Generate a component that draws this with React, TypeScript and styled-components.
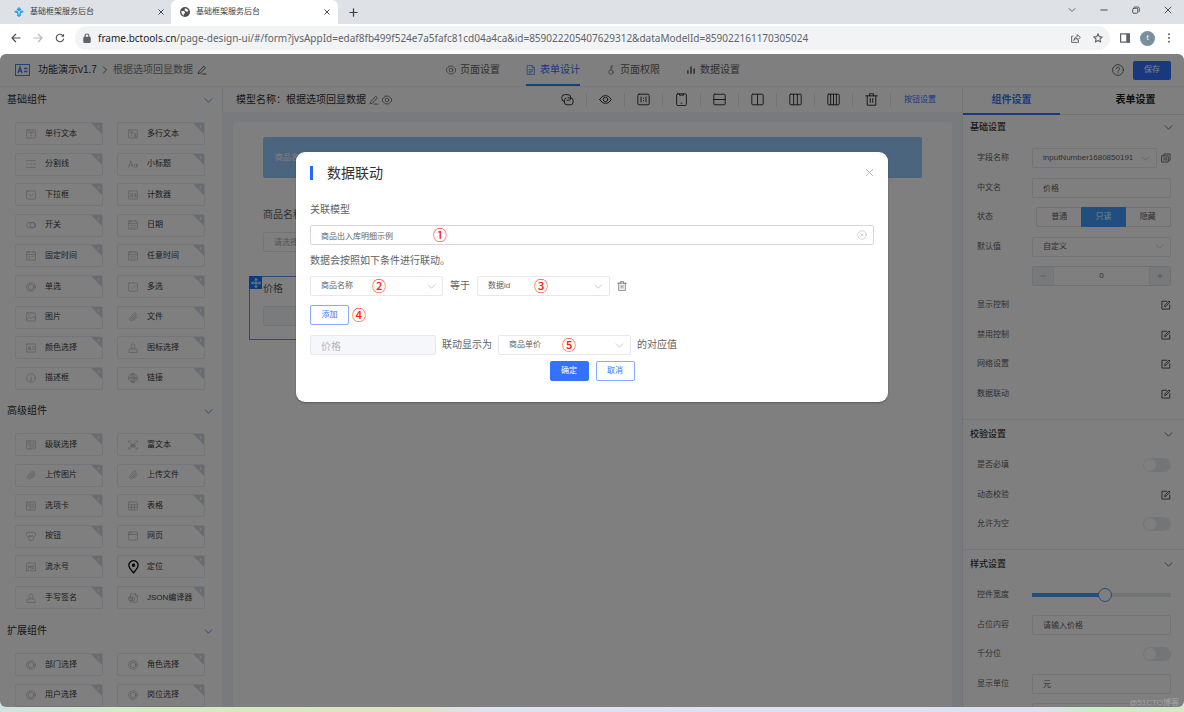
import React from 'react';
import styled, { createGlobalStyle, css } from 'styled-components';

const sans = `"Liberation Sans", "Noto Sans CJK SC", sans-serif`;
const chromeSans = `"Noto Sans", "Noto Sans CJK SC", sans-serif`;

const GlobalStyle = createGlobalStyle`
  *, *::before, *::after { box-sizing: border-box; }
  html, body { margin: 0; padding: 0; }
  body { font-family: ${sans}; font-size: 8px; line-height: 12px; color: #606266; overflow: hidden; }
  button, input, select { font: inherit; color: inherit; margin: 0; padding: 0; min-width: 0; }
  button { border: 0; background: none; display: inline-flex; align-items: center; justify-content: center; }
  a { color: inherit; text-decoration: none; }
  h1, h2, h3, p, ul { margin: 0; padding: 0; font-weight: 400; list-style: none; }
  svg { display: block; flex: none; }
`;

/* ---------- icons ---------- */

type IconProps = { size?: number; h?: number; w?: number; children: React.ReactNode };
const Svg = ({ size = 10, h, w = 1, children }: IconProps) => (
  <svg width={size} height={h ?? size} viewBox={`0 0 16 ${h ? Math.round((16 * h) / size) : 16}`} fill="none" stroke="currentColor"
    strokeWidth={w} strokeLinecap="round" strokeLinejoin="round" aria-hidden="true">
    {children}
  </svg>
);

const box = <rect x="1" y="1.5" width="14" height="13" rx="1" />;
const shapes: Record<string, React.ReactNode> = {
  text: <>{box}<path d="M5 5h6M8 5v6.5M5 5v1M11 5v1" /></>,
  textarea: <>{box}<path d="M3.5 5h5M6 5v6.5M10 8h3M11.5 8v3.5M10 11.5h3" /></>,
  divider: <path d="M1 2.500h14M1 13.500h14M1 8h2.500M6.700 8h2.600M12.500 8H15" />,
  title: <path d="M1 13L4.5 3 8 13M2.2 9.8h4.6M14.5 8v5M14.5 10.5a2.3 2.5 0 1 1-4.6 0a2.3 2.5 0 1 1 4.6 0" />,
  select: <>{box}<path d="M4.5 6.5L8 10l3.5-3.5" /></>,
  number: <>{box}<path d="M3.5 6v5M5.8 6h2v2.5h-2V11h2M10 6h2.5v5H10M10.5 8.5h2" /></>,
  toggle: <><rect x="1" y="4" width="14" height="8.5" rx="4.2" /><circle cx="10.7" cy="8.2" r="4.2" /></>,
  date: <>{box}<path d="M1 5.5h14M4.5 0.5v2M11.5 0.5v2M4.5 8.5h1M7.5 8.5h1M10.5 8.5h1M4.5 11.5h1M7.5 11.5h1M10.5 11.5h1" /></>,
  time: <>{box}<path d="M1 5.5h14M4.5 0.5v2M11.5 0.5v2M4.5 8.5h2M8.5 8.5h3M4.5 11.5h2" /></>,
  radio: <><circle cx="8" cy="8" r="7" /><circle cx="8" cy="8" r="4.4" /></>,
  check: <>{box}<path d="M4.5 8l2.6 2.6L12 6" /></>,
  image: <>{box}<path d="M1.5 12l3.5-3.5 2 2 4.5-3 3.5 3M4 5h2" /></>,
  clip: <path d="M13.5 6.5l-6.2 6.7a3 3 0 0 1-4.4-4.1L9.5 2a2.1 2.1 0 0 1 3.1 2.9L6.5 11.4a1 1 0 0 1-1.5-1.4l5.2-5.6M14.5 8l-5 5.5" />,
  color: <>{box}<path d="M3.5 11L5.7 5l2.2 6M4.3 9h2.8M10 6.5h3M10 10h3" /></>,
  stamp: <><path d="M5.8 9.5c0-1.5.4-2-.6-3.3a3.2 3.2 0 1 1 5.6 0c-1 1.3-.6 1.8-.6 3.3" /><path d="M1.5 14.5v-3.2q0-1.8 1.8-1.8h9.4q1.8 0 1.8 1.8v3.2z" /></>,
  info: <><circle cx="8" cy="8" r="7" /><path d="M8 7v4.5M8 4.4v.2M7 11.5h2" /></>,
  globe: <><circle cx="8" cy="8" r="7" /><ellipse cx="8" cy="8" rx="3.2" ry="7" /><path d="M1 8h14M8 1v14" /></>,
  columns: <>{box}<path d="M6.500 2v12M3 5h1.500M3 8h1.500M9 5h3.500M9 8h3.500M9 11h3.500" /></>,
  rich: <path d="M1 4V1.500h3M12 1.500h3V4M15 12v2.500h-3M4 14.500H1V12M4 5.500L6 4.500M12 5.500L10 4.500M4.500 11.500V8.500h7v3M6 6.500h4v5H6zM8 6.500v5" />,
  table: <>{box}<path d="M1 6h14M1 10h14M5.700 6v8M10.300 6v8" /></>,
  button: <><path d="M4 9H2.500Q1 9 1 7.500v-4Q1 2 2.500 2h11Q15 2 15 3.500v4Q15 9 13.500 9" /><path d="M4.500 11l2-4.500 1.500 3 2-2.500 2 3v3.500l-1.500 1.500h-4z" /></>,
  web: <>{box}<path d="M1 5.500h14M3.500 3.500h.5M6 3.500h.5" /></>,
  serial: <><path d="M1 14.500V1.500h14v13l-2.300-1.500-2.300 1.500L8 13l-2.300 1.500L3.300 13z" /><path d="M4 10V6l3 4V6M9.500 6h2.500v2.500h-2.500zM9.500 10.500H12" /></>,
  json: <><path d="M4 6V1.500h8l3 3v10H4v-2M12 1.500v3h3" /><rect x="1" y="6.500" width="9.500" height="5.500" rx="1" /><path d="M3.500 8v2.500M6 8v2.500h1.500V8z" /></>,
  pin: <><path d="M8 18.500C4 14 1.200 11 1.200 7.500a6.800 6.800 0 0 1 13.600 0C14.800 11 12 14 8 18.500z" /><circle cx="8" cy="7.500" r="1.600" fill="currentColor" /></>,
  gear: <><path d="M5.200 1.800h5.600L12.500 4l2.700 1.700v4.600L12.500 12l-1.700 2.200H5.200L3.500 12 .8 10.300V5.700L3.500 4z" /><circle cx="8" cy="8" r="3" /></>,
  doc: <><path d="M2.500 1h7.500l3.500 3.500V15h-11zM10 1v3.500h3.500M5 7.500h6M5 10h6M5 12.500h3" /></>,
  key: <><circle cx="8" cy="11.300" r="3.500" /><path d="M8 7.800V1.500h3M8 4.500h2" /></>,
  bars: <path d="M3 14V8.500M8 14V2.500M13 14V5.500" strokeWidth="2.500" strokeLinecap="butt" />,
  pen: <path d="M3 10.500L10.800 1.800l2.700 2.400-7.800 8.700-3.400.8zM8 14.500h6.500" />,
  chevron: <path d="M2 5l6 6 6-6" />,
  right: <path d="M5 2l6 6-6 6" />,
  close: <path d="M2 2l12 12M14 2L2 14" />,
  plus: <path d="M8 1.500v13M1.500 8h13" />,
  minus: <path d="M1.500 8h13" />,
  help: <><circle cx="8" cy="8" r="7.200" /><path d="M5.800 6.300a2.200 2.200 0 1 1 3.300 1.900Q8 8.800 8 9.800M8 11.700v.2" /></>,
  link: <><path d="M4.500 10.500A3.500 3.500 0 0 1 1 7V5.500A3.500 3.500 0 0 1 4.500 2h4A3.500 3.500 0 0 1 12 5.500V6a3 3 0 0 1-3 3H7.500" /><path d="M8.500 6h3A3.500 3.500 0 0 1 15 9.500V11a3.500 3.500 0 0 1-3.500 3.500h-4A3.500 3.500 0 0 1 4 11V9.500A3.500 3.500 0 0 1 6 6.300" /></>,
  eye: <><path d="M.8 8Q3.500 3 8 3t7.200 5Q12.500 13 8 13T.8 8z" /><circle cx="8" cy="8" r="2.800" /></>,
  ratio: <><rect x="1" y="1.500" width="14" height="13" rx="1.500" /><path d="M5 5v6M11 5v6M8 6.300v.3M8 9.400v.3" /></>,
  phone: <><rect x="2" y="1" width="12" height="14.500" rx="1.500" /><path d="M5.500 1.200v1.500h5V1.200M7.500 12.500h1" /></>,
  rows: <><rect x="1" y="1.500" width="14" height="13" rx="1" /><path d="M1 8h14" /></>,
  col2: <><rect x="1" y="1.500" width="14" height="13" rx="1" /><path d="M8 1.500v13" /></>,
  col3: <><rect x="1" y="1.500" width="14" height="13" rx="1" /><path d="M5.700 1.500v13M10.300 1.500v13" /></>,
  col4: <><rect x="1" y="1.500" width="14" height="13" rx="1" /><path d="M4.500 1.500v13M8 1.500v13M11.500 1.500v13" /></>,
  trash: <path d="M1 3.500h14M5.500 3.500V1h5v2.500M2.700 3.500V15h10.600V3.500M6.500 6.800v4.700M9.500 6.800v4.700" />,
  copy: <><path d="M4.500 4V1.500h10v10H12" /><path d="M1.500 4.500h10v10h-10zM4 8h5M4 11h5" /></>,
  edit: <><path d="M9 2H1.500v12.500H14V8" /><path d="M6 10l.5-2.300L12.700 1.500l1.800 1.800-6.200 6.200z" /></>,
  clear: <><circle cx="8" cy="8" r="6.800" /><path d="M6 6l4 4M10 6l-4 4" /></>,
  back: <path d="M14.500 8H1.800M7.500 2L1.500 8l6 6" />,
  forward: <path d="M1.500 8h12.700M8.500 2l6 6-6 6" />,
  reload: <><path d="M13.800 9.500A6 6 0 1 1 12.500 4" /><path d="M14.500 1v5h-5z" fill="currentColor" stroke="none" /></>,
  lock: <><rect x="3" y="7" width="10" height="8" rx="1" fill="currentColor" /><path d="M5 7V4.500a3 3 0 0 1 6 0V7" /></>,
  share: <><path d="M3 5H1v10h11v-3" /><path d="M4.500 11.500Q5 6 10 5.700V2.500l5 4.500-5 4.500V8.500Q6.500 8.500 4.500 11.500z" /></>,
  star: <path d="M8 1.300l2 4.500 4.900.5-3.700 3.300 1.100 4.900L8 12l-4.300 2.500 1.100-4.900L1.100 6.300 6 5.800z" />,
  side: <><rect x="1" y="1.500" width="14" height="13" /><path d="M11 2h4v12h-4z" fill="currentColor" /></>,
  dots: <path d="M8 2v.1M8 8v.1M8 14v.1" strokeWidth="3.200" />,
  restore: <><rect x="1.500" y="4.500" width="10" height="10" rx="2" /><path d="M5 2h6.500q3 0 3 3v6" /></>,
  move: <path d="M8 1v14M1 8h14M6 3l2-2 2 2M6 13l2 2 2-2M3 6L1 8l2 2M13 6l2 2-2 2" />,
};

const Icon = ({ name, size, h, w }: { name: string; size?: number; h?: number; w?: number }) => (
  <Svg size={size} h={h} w={w}>{shapes[name]}</Svg>
);

/* ---------- browser frame ---------- */

const Browser = styled.div`
  display: flex; flex-direction: column; height: 100vh;
  background: linear-gradient(90deg, #cfe3e0 0, #d0ecc8 10%, #d3e9c4 20%, #e2e0c8 36%, #dbe2f2 41%, #dbe1f2 88%, #cdebc8 92%, #d0e9cb 100%);
  padding-bottom: 5px;
`;
const TabStrip = styled.div`
  display: flex; align-items: stretch; height: 24px; flex: none; background: #dee1e6; font-family: ${sans}; color: #3c4043;
`;
const BrowserTab = styled.div<{ $active?: boolean }>`
  display: flex; align-items: center; gap: 6px; width: 167px; padding: 0 8px 0 9px;
  border-radius: 6px 6px 0 0; background: ${p => (p.$active ? '#fff' : 'transparent')};
  &:first-child { width: 171px; padding: 0 7px 0 14px; }
  button { margin-left: auto; }
`;
const StripButton = styled.button` width: 30px; `;
const WindowControls = styled.div`
  margin-left: auto; display: flex; align-items: center; padding-bottom: 4px;
  button { width: 32px; }
`;
const AddressRow = styled.div`
  display: flex; align-items: center; height: 30px; flex: none; padding: 0 10px 2px 9px; background: #fff; color: #5f6368;
`;
const NavButton = styled.button<{ $muted?: boolean }>`
  width: 22px; height: 20px; color: ${p => (p.$muted ? '#b5b8bc' : '#4a4d51')};
  &:first-child { width: 13px; margin-right: 5px; }
`;
const Omnibox = styled.div`
  flex: 1; display: flex; align-items: center; gap: 6px; height: 24px; margin: 0 10px 0 4px; padding: 0 7px;
  border-radius: 12px; background: #f1f3f4; font-family: ${chromeSans};
  button { margin-left: 6px; }
`;
const Url = styled.p`
  flex: 1; line-height: 16px; white-space: nowrap; overflow: hidden; font-size: 10px;
  b { font-weight: 400; color: #202124; }
`;
const Avatar = styled.button`
  width: 15px; height: 15px; margin: 0 9px 0 10px; border-radius: 50%; background: #78909c; color: #fff;
`;
const Viewport = styled.div`
  position: relative; flex: 1; min-height: 0; display: flex; flex-direction: column; overflow: hidden;
  background: #fff; border-radius: 6px;
`;
const Frame = styled.div` flex: 1; min-height: 0; display: flex; background: linear-gradient(#fff 20px, transparent 20px); `;

/* ---------- app header ---------- */

const Header = styled.header`
  display: grid; grid-template-columns: 1fr auto 1fr; flex: none; height: 33px;
  padding: 0 13px 0 15px; border-bottom: 1px solid #eef0f4; font-size: 10px;
`;
const Crumbs = styled.div`
  display: flex; align-items: center; gap: 4px; color: #303133;
  span { color: #7a7c80; }
`;
const Logo = styled.span` margin-right: 4px; `;
const TopNav = styled.nav` display: flex; gap: 26px; `;
const TopLink = styled.a<{ $active?: boolean }>`
  display: flex; align-items: center; gap: 4px; height: 32px; padding-top: 2px;
  color: ${p => (p.$active ? '#3471ff' : '#606266')}; border-bottom: 2px solid ${p => (p.$active ? '#1e88f5' : 'transparent')};
`;
const HeaderActions = styled.div` display: flex; align-items: center; justify-content: flex-end; gap: 9px; color: #606266; `;
const SaveButton = styled.button` width: 38px; height: 19px; border-radius: 2px; background: #3471ff; color: #fff; font-size: 8px; `;
const SmallButton = styled.button<{ $primary?: boolean }>`
  width: 39px; height: 20px; border-radius: 2px; border: 1px solid ${p => (p.$primary ? '#3471ff' : '#85aaff')};
  background: ${p => (p.$primary ? '#3471ff' : '#fff')}; color: ${p => (p.$primary ? '#fff' : '#3471ff')};
`;

const Body = styled.div` flex: 1; min-height: 0; display: flex; `;

/* ---------- component palette ---------- */

const Palette = styled.aside` width: 222px; flex: none; overflow: hidden; `;
const PaletteHeading = styled.h2`
  display: flex; align-items: center; justify-content: space-between; height: 26px; padding: 0 9px 0 7px;
  font-size: 10px; color: #303133;
  svg { color: #3471ff; }
`;
const PaletteGrid = styled.ul`
  display: grid; grid-template-columns: 1fr 1fr; grid-auto-rows: 31px 30px 31px 30px 31px; align-items: center;
  column-gap: 14px; padding: 5px 17px 5px 15px;
`;
const PaletteItem = styled.button<{ $dark?: boolean }>`
  position: relative; width: 100%; height: 23px; justify-content: flex-start; gap: 9px; padding-left: 10px;
  border: 1px solid #e9ebf0; border-radius: 2px; color: #3a3c40; white-space: nowrap;
  svg:first-child { color: ${p => (p.$dark ? '#000' : '#acaeb3')}; }
`;
const PinIcon = styled.span`
  width: 10px; display: flex; justify-content: center; color: #000;
`;
const Corner = styled.svg` position: absolute; top: 0; right: 0; `;

const palette: { title: string; items: [string, string][] }[] = [
  { title: '基础组件', items: [
    ['text', '单行文本'], ['textarea', '多行文本'], ['divider', '分割线'], ['title', '小标题'], ['select', '下拉框'], ['number', '计数器'],
    ['toggle', '开关'], ['date', '日期'], ['time', '固定时间'], ['date', '任意时间'], ['radio', '单选'], ['check', '多选'],
    ['image', '图片'], ['clip', '文件'], ['color', '颜色选择'], ['stamp', '图标选择'], ['info', '描述框'], ['globe', '链接'],
  ] },
  { title: '高级组件', items: [
    ['columns', '级联选择'], ['rich', '富文本'], ['clip', '上传图片'], ['clip', '上传文件'], ['columns', '选项卡'], ['table', '表格'],
    ['button', '按钮'], ['web', '网页'], ['serial', '流水号'], ['pin', '定位'], ['stamp', '手写签名'], ['json', 'JSON编译器'],
  ] },
  { title: '扩展组件', items: [['radio', '部门选择'], ['radio', '角色选择'], ['radio', '用户选择'], ['radio', '岗位选择']] },
];

/* ---------- designer ---------- */

const Designer = styled.main` flex: 1; min-width: 0; display: flex; flex-direction: column; background: #f0f4fa; `;
const ToolBar = styled.div`
  display: flex; align-items: center; justify-content: space-between; height: 25px; flex: none;
  padding: 0 26px 0 13px; border-left: 1px solid #e6e9ef; background: #fff; color: #303133;
`;
const ModelName = styled.div`
  display: flex; align-items: center; gap: 3px; font-size: 10px;
  svg { color: #606266; }
`;
const Tools = styled.div`
  display: flex; align-items: center;
  button { width: 38px; height: 14px; border-right: 1px solid #e4e7ed; }
  a { margin-left: 13px; color: #3471ff; }
`;
const Canvas = styled.div`
  flex: 1; margin: 10px 10px 0 11px; padding: 15px 30px 0; border-radius: 3px 3px 0 0; background: #fff;
`;
const Banner = styled.div`
  display: flex; align-items: center; height: 41px; padding-left: 12px; border-radius: 2px; background: #99cafd; color: #fff;
`;
const CanvasField = styled.div<{ $selected?: boolean }>`
  position: relative; display: flex; flex-direction: column; gap: 10px; width: 50%; font-size: 10px;
  margin: ${p => (p.$selected ? '24px 0 0 -14px' : '30px 0 0')};
  padding: ${p => (p.$selected ? '5px 14px 13px 13px' : '0')};
  border: ${p => (p.$selected ? '1px solid #5b93f5' : '0')};
  label { line-height: 14px; }
`;
const MoveHandle = styled.button`
  position: absolute; top: -1px; left: -1px; width: 13px; height: 13px; background: #1677ff; color: #fff;
`;

/* ---------- fields ---------- */

const boxed = css<{ $dark?: boolean }>`
  width: 100%; height: 20px; padding: 0 10px; border-radius: 2px; background: #fff; outline: 0; font-size: 8px;
  border: 1px solid ${p => (p.$dark ? '#d4d7de' : '#e6e8ed')};
`;
const TextField = styled.input<{ $dark?: boolean }>`
  ${boxed}
  &::placeholder { color: #a8abb2; opacity: 1; }
  &:disabled { background: #f5f7fa; color: #b4b8c0; font-size: 10px; }
`;
const NativeSelect = styled.select` ${boxed} appearance: none; `;
const FieldBox = styled.div<{ $w?: number }>`
  display: grid; grid-template-columns: minmax(0, 1fr); align-items: center; position: relative;
  ${p => (p.$w ? `width: ${p.$w}px; flex: none;` : 'flex: 1; min-width: 0;')}
  > * { grid-area: 1 / 1; }
  > svg { justify-self: end; margin-right: 7px; color: #b4b8c0; pointer-events: none; }
`;
const Select = ({ id, value, w, label, children }: { id?: string; value: string; w?: number; label?: string; children?: React.ReactNode }) => (
  <FieldBox $w={w}>
    <NativeSelect id={id} aria-label={label} defaultValue={value}><option>{value}</option></NativeSelect>
    <Icon name="chevron" size={9} w={1.300} />
    {children}
  </FieldBox>
);

/* ---------- settings panel ---------- */

const Settings = styled.aside` width: 222px; flex: none; overflow: hidden; border-left: 1px solid #e6e9ef; `;
const SettingTabs = styled.div`
  display: flex; justify-content: space-between; height: 28px; border-bottom: 1px solid #e0e4eb;
`;
const SettingTab = styled.button<{ $active?: boolean }>`
  width: 97px; height: 28px; font-size: 10px; font-weight: 700; color: ${p => (p.$active ? '#3471ff' : '#202124')};
  border-bottom: 2px solid ${p => (p.$active ? '#3471ff' : 'transparent')};
`;
const Section = styled.section`
  padding: 0 13px 11px 7px;
  & + & { padding-top: 2px; border-top: 1px solid #eceef2; }
  &:last-child { padding-bottom: 0; }
`;
const SectionTitle = styled.h3`
  display: flex; align-items: center; justify-content: space-between; height: 24px; margin-right: -2px;
  font-size: 9px; font-weight: 500; color: #303133;
`;
const Rows = styled.div`
  display: grid; grid-template-columns: minmax(0, 1fr); grid-auto-rows: 29px 30px 29px 30px 29px; padding: 4px 0 0 7px;
`;
const Row = styled.div`
  display: flex; align-items: center; gap: 4px; padding-top: 1px;
  > label, > span:first-child { width: 51px; flex: none; color: #606266; }
`;
const EditButton = styled.button` margin-left: auto; width: 10px; height: 20px; color: #4a4c50; `;
const CopyButton = styled.button` width: 10px; height: 20px; `;
const RadioGroup = styled.div`
  flex: 1; display: flex; height: 20px; margin-left: 4px; border: 1px solid #e0e3e9; border-radius: 2px;
  label { flex: 1; display: flex; align-items: center; justify-content: center; }
  input { appearance: none; width: 0; height: 0; }
  label:has(input:checked) { background: #409eff; color: #fff; margin: -1px 0; }
`;
const Stepper = styled.div`
  flex: 1; display: flex; height: 20px; border: 1px solid #e0e3e9; border-radius: 2px; overflow: hidden; margin-left: 55px;
  button { width: 20px; flex: none; background: #f1f3f7; color: #8a8d93; }
  input { flex: 1; border: 0; text-align: center; outline: 0; border-left: 1px solid #e6e8ed; border-right: 1px solid #e6e8ed; }
`;
const Toggle = styled.input`
  &&& { appearance: none; width: 28px; height: 14px; margin-left: auto; padding: 1px; }
  border-radius: 7px; background: #e9ebef; display: flex;
  &::before { content: ''; width: 12px; height: 12px; border-radius: 50%; background: #fff; }
`;
const Slider = styled.input`
  appearance: none; flex: 1; height: 14px; background: linear-gradient(90deg, #409eff 52%, #e4e7ed 52%) center / 100% 4px no-repeat;
  &::-webkit-slider-thumb { appearance: none; width: 14px; height: 14px; border: 1px solid #409eff; border-radius: 50%; background: #fff; }
`;
const Watermark = styled.small`
  position: absolute; right: 5px; bottom: -2px; font-size: 8px; color: #a4a4a4; z-index: 3;
`;

/* ---------- dialog ---------- */

const Overlay = styled.div`
  position: absolute; inset: 0; z-index: 2; display: flex; justify-content: center; align-items: flex-start;
  padding-top: 98px; background: rgba(0, 0, 0, 0.5);
`;
const Dialog = styled.div`
  width: 50%; padding: 0 14px 21px; border-radius: 9px; background: #fff; font-size: 10px;
  box-shadow: 0 1px 2px rgba(0, 0, 0, 0.3);
`;
const DialogHead = styled.div`
  display: flex; align-items: center; height: 41px; margin-bottom: 7px;
  h2 { font-size: 14px; line-height: 20px; color: #303133; }
  h2::before { content: ''; display: inline-block; width: 3px; height: 14px; margin-right: 14px; vertical-align: -2px; background: #2468ff; }
  button { margin-left: auto; color: #a8abb2; }
`;
const DialogLine = styled.div<{ $after: number; $gap?: number; $center?: boolean }>`
  display: flex; align-items: center; gap: ${p => p.$gap ?? 7}px; height: 20px; margin-bottom: ${p => p.$after}px;
  justify-content: ${p => (p.$center ? 'center' : 'flex-start')}; white-space: nowrap;
  button { font-size: 8px; }
`;
const IconButton = styled.button` width: 10px; color: #606266; `;
const Mark = styled.span<{ $x: number }>`
  position: absolute; left: ${p => p.$x}px; top: -1px; font: 500 14px/20px "Noto Sans CJK SC", sans-serif; color: #ff1a0d; pointer-events: none;
`;

const topLinks: [string, string, boolean?][] = [['gear', '页面设置'], ['doc', '表单设计', true], ['key', '页面权限'], ['bars', '数据设置']];
const tools: [string, string][] = [
  ['link', '关联'], ['eye', '预览'], ['ratio', '比例'], ['phone', '手机'], ['rows', '单列'], ['col2', '两列'], ['col3', '三列'], ['col4', '四列'], ['trash', '清空'],
];

const EditRow = ({ label }: { label: string }) => (
  <Row><span>{label}</span><EditButton aria-label={`编辑${label}`}><Icon name="edit" w={1.500} /></EditButton></Row>
);
const ToggleRow = ({ id, label }: { id: string; label: string }) => (
  <Row><label htmlFor={id}>{label}</label><Toggle id={id} type="checkbox" role="switch" /></Row>
);
const TitleRow = ({ children }: { children: string }) => (
  <SectionTitle>{children}<Icon name="chevron" size={9} w={1.200} /></SectionTitle>
);

const LinkDialog = () => (
  <Overlay>
    <Dialog role="dialog" aria-labelledby="dialog-title">
      <DialogHead>
        <h2 id="dialog-title">数据联动</h2>
        <button aria-label="关闭"><Icon name="close" size={9} w={1.500} /></button>
      </DialogHead>
      <DialogLine $after={5}><label htmlFor="model">关联模型</label></DialogLine>
      <DialogLine $after={6}>
        <FieldBox>
          <TextField id="model" $dark defaultValue="商品出入库明细示例" />
          <Icon name="clear" size={10} />
          <Mark $x={123}>①</Mark>
        </FieldBox>
      </DialogLine>
      <DialogLine $after={5}><p>数据会按照如下条件进行联动。</p></DialogLine>
      <DialogLine $after={9}>
        <Select w={133} value="商品名称" label="商品字段"><Mark $x={62}>②</Mark></Select>
        <span>等于</span>
        <Select w={133} value="数据id" label="数据字段"><Mark $x={57}>③</Mark></Select>
        <IconButton aria-label="删除"><Icon name="trash" w={1.200} /></IconButton>
      </DialogLine>
      <DialogLine $after={10}>
        <FieldBox $w={39}>
          <SmallButton>添加</SmallButton>
          <Mark $x={42}>④</Mark>
        </FieldBox>
      </DialogLine>
      <DialogLine $after={6} $gap={6}>
        <FieldBox $w={126}><TextField disabled defaultValue="价格" aria-label="联动字段" /></FieldBox>
        <span>联动显示为</span>
        <Select w={133} value="商品单价" label="显示字段"><Mark $x={64}>⑤</Mark></Select>
        <span>的对应值</span>
      </DialogLine>
      <DialogLine $after={0} $center>
        <SmallButton $primary>确定</SmallButton>
        <SmallButton>取消</SmallButton>
      </DialogLine>
    </Dialog>
  </Overlay>
);

export default function App() {
  return (
    <Browser>
      <GlobalStyle />
      <TabStrip>
        <BrowserTab>
          <svg width="10" height="10" viewBox="0 0 16 16" aria-hidden="true">
            <path d="M8 0l4 4-4 3-4-3zM3.500 5L7 8v3L0 8zM12.500 5L9 8v3l7-3zM8 12l3-2v4l-3 2-3-2v-4z" fill="#2aa3ef" />
          </svg>
          基础框架服务后台
          <button aria-label="关闭标签页"><Icon name="close" size={6} w={2.500} /></button>
        </BrowserTab>
        <BrowserTab $active>
          <svg width="10" height="10" viewBox="0 0 16 16" aria-hidden="true">
            <circle cx="8" cy="8" r="8" fill="#4d5156" />
            <path d="M2 6.500h4l2 2v2H6v3.500Q2 12 2 6.500zM8 2q4 0 5.500 4l-2.500 2-2-2H7.500V4z" fill="#fff" />
          </svg>
          基础框架服务后台
          <button aria-label="关闭标签页"><Icon name="close" size={6} w={2.500} /></button>
        </BrowserTab>
        <StripButton aria-label="新标签页"><Icon name="plus" size={9} w={2.200} /></StripButton>
        <WindowControls>
          <button aria-label="搜索标签页"><Icon name="chevron" size={8} w={1.500} /></button>
          <button aria-label="最小化"><Icon name="minus" size={8} w={1.800} /></button>
          <button aria-label="还原"><Icon name="restore" size={8} w={1.700} /></button>
          <button aria-label="关闭"><Icon name="close" size={8} w={1.800} /></button>
        </WindowControls>
      </TabStrip>
      <AddressRow>
        <NavButton aria-label="后退"><Icon name="back" w={1.800} /></NavButton>
        <NavButton aria-label="前进" $muted><Icon name="forward" w={1.800} /></NavButton>
        <NavButton aria-label="刷新"><Icon name="reload" w={1.800} /></NavButton>
        <Omnibox>
          <Icon name="lock" w={1.800} />
          <Url><b>frame.bctools.cn</b>/page-design-ui/#/form?jvsAppId=edaf8fb499f524e7a5fafc81cd04a4ca&amp;id=859022205407629312&amp;dataModelId=859022161170305024</Url>
          <button aria-label="分享"><Icon name="share" w={1.500} /></button>
          <button aria-label="收藏"><Icon name="star" w={1.700} /></button>
        </Omnibox>
        <button aria-label="侧边栏"><Icon name="side" w={2} /></button>
        <Avatar aria-label="账号">t</Avatar>
        <button aria-label="菜单"><Icon name="dots" /></button>
      </AddressRow>
      <Frame>
        <Viewport>
          <Header>
            <Crumbs>
              <Logo>
                <svg width="15" height="12" viewBox="0 0 15 12" fill="none" stroke="#3b82f6" aria-hidden="true">
                  <rect x="0.500" y="0.500" width="14" height="11" />
                  <path d="M3 9l2-6 2 6M3.800 7.200h2.600M9 4.500h3.500M9 7.500h3.500" strokeWidth="1.300" />
                </svg>
              </Logo>
              功能演示v1.7
              <Icon name="right" size={8} w={1.500} />
              <span>根据选项回显数据</span>
              <Icon name="pen" w={1.200} />
            </Crumbs>
            <TopNav>
              {topLinks.map(([icon, label, active]) => (
                <TopLink key={label} href="#" $active={active}><Icon name={icon} w={1.100} />{label}</TopLink>
              ))}
            </TopNav>
            <HeaderActions>
              <Icon name="help" size={12} w={1.200} />
              <SaveButton>保存</SaveButton>
            </HeaderActions>
          </Header>
          <Body>
            <Palette>
              {palette.map(group => (
                <section key={group.title}>
                  <PaletteHeading>{group.title}<Icon name="chevron" size={9} w={1.400} /></PaletteHeading>
                  <PaletteGrid>
                    {group.items.map(([icon, label]) => (
                      <li key={label}>
                        <PaletteItem $dark={icon === 'pin'}>
                          {icon === 'pin' ? <PinIcon><Icon name="pin" size={11} h={14} w={1.800} /></PinIcon> : <Icon name={icon} />}
                          {label}
                          <Corner width="11" height="11" viewBox="0 0 11 11" aria-hidden="true">
                            <path d="M0 0h11v11z" fill="#d3d7e0" />
                            <path d="M8 2l-1 3" stroke="#fff" />
                          </Corner>
                        </PaletteItem>
                      </li>
                    ))}
                  </PaletteGrid>
                </section>
              ))}
            </Palette>
            <Designer>
              <ToolBar>
                <ModelName>模型名称：根据选项回显数据<Icon name="pen" w={1.300} /><Icon name="gear" w={1.200} /></ModelName>
                <Tools>
                  {tools.map(([icon, label]) => (
                    <button key={icon} aria-label={label}><Icon name={icon} size={13} w={1.200} /></button>
                  ))}
                  <a href="#">按钮设置</a>
                </Tools>
              </ToolBar>
              <Canvas>
                <Banner>商品名称</Banner>
                <CanvasField>
                  <label htmlFor="goods">商品名称</label>
                  <TextField id="goods" placeholder="请选择" />
                </CanvasField>
                <CanvasField $selected>
                  <MoveHandle aria-label="移动"><Icon name="move" w={1.600} /></MoveHandle>
                  <label htmlFor="price">价格</label>
                  <TextField id="price" disabled />
                </CanvasField>
              </Canvas>
            </Designer>
            <Settings>
              <SettingTabs role="tablist">
                <SettingTab role="tab" aria-selected $active>组件设置</SettingTab>
                <SettingTab role="tab">表单设置</SettingTab>
              </SettingTabs>
              <Section>
                <TitleRow>基础设置</TitleRow>
                <Rows>
                  <Row>
                    <label htmlFor="field">字段名称</label>
                    <Select id="field" value="inputNumber1680850191" />
                    <CopyButton aria-label="复制"><Icon name="copy" w={1.400} /></CopyButton>
                  </Row>
                  <Row><label htmlFor="cname">中文名</label><TextField id="cname" defaultValue="价格" /></Row>
                  <Row>
                    <span>状态</span>
                    <RadioGroup role="radiogroup" aria-label="状态">
                      <label><input type="radio" name="state" />普通</label>
                      <label><input type="radio" name="state" defaultChecked />只读</label>
                      <label><input type="radio" name="state" />隐藏</label>
                    </RadioGroup>
                  </Row>
                  <Row><label htmlFor="preset">默认值</label><Select id="preset" value="自定义" /></Row>
                  <Row>
                    <Stepper>
                      <button aria-label="减少"><Icon name="minus" size={6} w={1.500} /></button>
                      <input aria-label="默认数值" defaultValue="0" />
                      <button aria-label="增加"><Icon name="plus" size={6} w={1.500} /></button>
                    </Stepper>
                  </Row>
                  <EditRow label="显示控制" />
                  <EditRow label="禁用控制" />
                  <EditRow label="网络设置" />
                  <EditRow label="数据联动" />
                </Rows>
              </Section>
              <Section>
                <TitleRow>校验设置</TitleRow>
                <Rows>
                  <ToggleRow id="required" label="是否必填" />
                  <EditRow label="动态校验" />
                  <ToggleRow id="nullable" label="允许为空" />
                </Rows>
              </Section>
              <Section>
                <TitleRow>样式设置</TitleRow>
                <Rows>
                  <Row><label htmlFor="width">控件宽度</label><Slider id="width" type="range" min={0} max={24} step="any" defaultValue={12.600} /></Row>
                  <Row><label htmlFor="hint">占位内容</label><TextField id="hint" defaultValue="请输入价格" /></Row>
                  <ToggleRow id="thousand" label="千分位" />
                  <Row><label htmlFor="unit">显示单位</label><TextField id="unit" defaultValue="元" /></Row>
                  <Row><label htmlFor="extra" aria-label="其他" /><TextField id="extra" /></Row>
                </Rows>
              </Section>
            </Settings>
          </Body>
          <LinkDialog />
          <Watermark>@51CTO博客</Watermark>
        </Viewport>
      </Frame>
    </Browser>
  );
}
